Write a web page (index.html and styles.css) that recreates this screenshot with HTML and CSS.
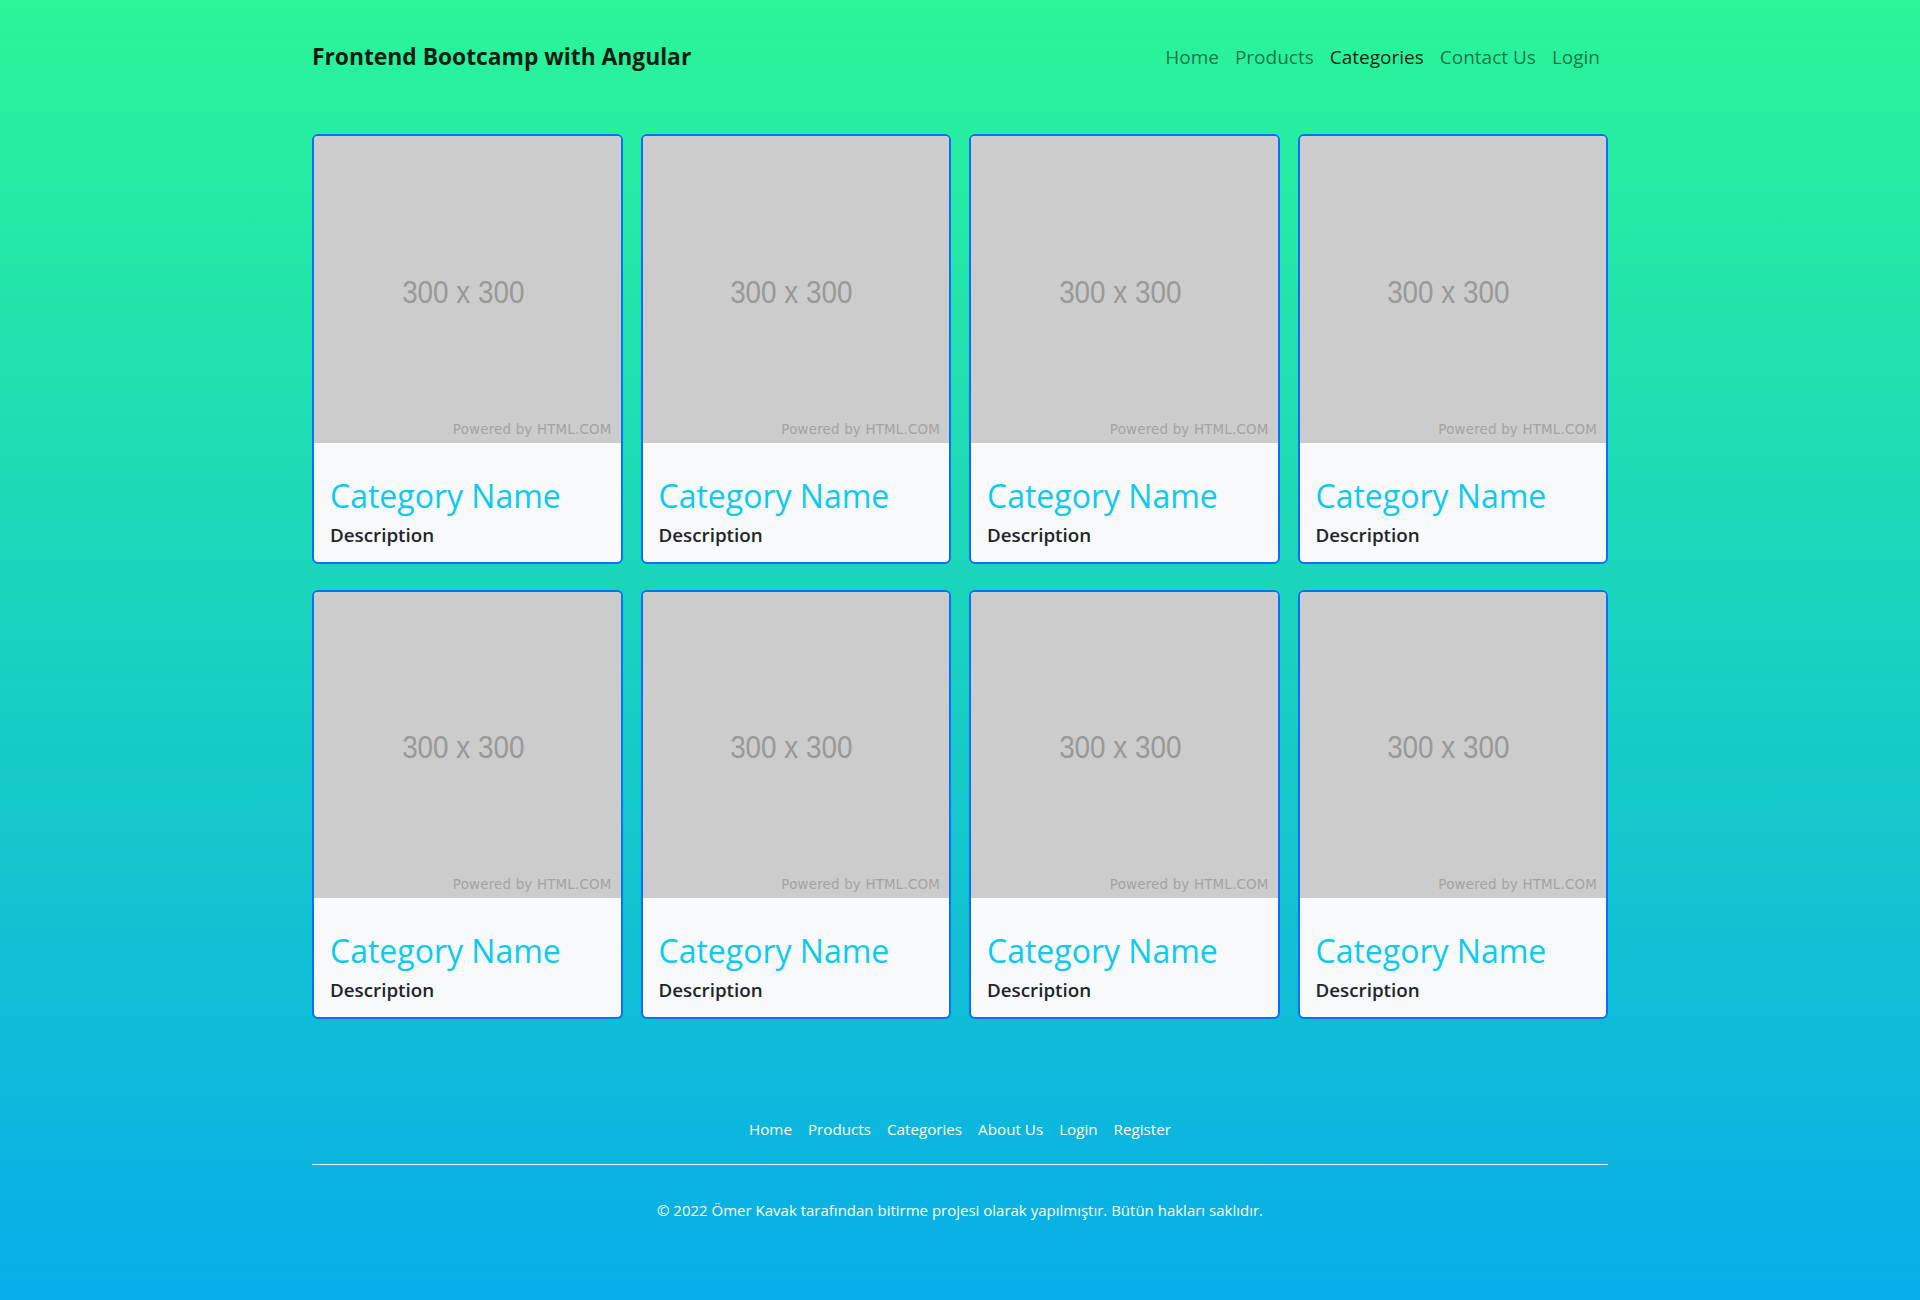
FILE: index.html
```html
<!DOCTYPE html>
<html lang="tr">
<head>
<meta charset="utf-8">
<title>Frontend Bootcamp with Angular</title>
<link rel="stylesheet" href="styles.css">
</head>
<body>
<div class="page">
  <header class="container header">
    <a class="brand" href="#">Frontend Bootcamp with Angular</a>
    <nav class="nav">
      <a href="#" class="nav-link">Home</a>
      <a href="#" class="nav-link">Products</a>
      <a href="#" class="nav-link active">Categories</a>
      <a href="#" class="nav-link">Contact Us</a>
      <a href="#" class="nav-link">Login</a>
    </nav>
  </header>

  <main class="container grid">
    <div class="card"><div class="thumb"><span class="thumb-size">300 x 300</span><span class="thumb-credit">Powered by HTML.COM</span></div><div class="card-body"><h2 class="card-title">Category Name</h2><h5 class="card-text">Description</h5></div></div>
    <div class="card"><div class="thumb"><span class="thumb-size">300 x 300</span><span class="thumb-credit">Powered by HTML.COM</span></div><div class="card-body"><h2 class="card-title">Category Name</h2><h5 class="card-text">Description</h5></div></div>
    <div class="card"><div class="thumb"><span class="thumb-size">300 x 300</span><span class="thumb-credit">Powered by HTML.COM</span></div><div class="card-body"><h2 class="card-title">Category Name</h2><h5 class="card-text">Description</h5></div></div>
    <div class="card"><div class="thumb"><span class="thumb-size">300 x 300</span><span class="thumb-credit">Powered by HTML.COM</span></div><div class="card-body"><h2 class="card-title">Category Name</h2><h5 class="card-text">Description</h5></div></div>
    <div class="card"><div class="thumb"><span class="thumb-size">300 x 300</span><span class="thumb-credit">Powered by HTML.COM</span></div><div class="card-body"><h2 class="card-title">Category Name</h2><h5 class="card-text">Description</h5></div></div>
    <div class="card"><div class="thumb"><span class="thumb-size">300 x 300</span><span class="thumb-credit">Powered by HTML.COM</span></div><div class="card-body"><h2 class="card-title">Category Name</h2><h5 class="card-text">Description</h5></div></div>
    <div class="card"><div class="thumb"><span class="thumb-size">300 x 300</span><span class="thumb-credit">Powered by HTML.COM</span></div><div class="card-body"><h2 class="card-title">Category Name</h2><h5 class="card-text">Description</h5></div></div>
    <div class="card"><div class="thumb"><span class="thumb-size">300 x 300</span><span class="thumb-credit">Powered by HTML.COM</span></div><div class="card-body"><h2 class="card-title">Category Name</h2><h5 class="card-text">Description</h5></div></div>
  </main>

  <footer class="container footer">
    <nav class="footer-nav">
      <a href="#" class="footer-link">Home</a>
      <a href="#" class="footer-link">Products</a>
      <a href="#" class="footer-link">Categories</a>
      <a href="#" class="footer-link">About Us</a>
      <a href="#" class="footer-link">Login</a>
      <a href="#" class="footer-link">Register</a>
    </nav>
    <p class="copyright">© 2022 Ömer Kavak tarafından bitirme projesi olarak yapılmıştır. Bütün hakları saklıdır.</p>
  </footer>
</div>
</body>
</html>
```

FILE: styles.css
```css
* { box-sizing: border-box; }

html, body {
  margin: 0;
  padding: 0;
}

body {
  font-family: "Open Sans", "Noto Sans", sans-serif;
  color: #212529;
  background: linear-gradient(to bottom, #2af598 0px, #07ade9 1300px);
  min-height: 1300px;
}

.page {
  min-height: 1300px;
}

.container {
  width: 1296px;
  margin: 0 auto;
}

/* Header */
.header {
  display: flex;
  align-items: center;
  justify-content: space-between;
  padding-top: 39px;
  height: 74px;
}

.brand {
  font-size: 22.8px;
  font-weight: 700;
  line-height: 36px;
  color: rgba(0, 0, 0, 0.9);
  text-decoration: none;
}

.nav {
  display: flex;
  align-items: center;
}

.nav-link {
  font-size: 19px;
  line-height: 36px;
  padding: 0 8px;
  color: rgba(0, 0, 0, 0.55);
  text-decoration: none;
}

.nav-link.active {
  color: rgba(0, 0, 0, 0.9);
}

/* Grid of cards */
.grid {
  display: grid;
  grid-template-columns: repeat(4, 1fr);
  column-gap: 18px;
  row-gap: 26px;
  padding-top: 60px;
}

.card {
  background: #f8f9fa;
  border: 2px solid #0d6efd;
  border-radius: 6px;
  overflow: hidden;
}

.thumb {
  position: relative;
  aspect-ratio: 1 / 1;
  background: #cccccc;
  display: flex;
  align-items: center;
  justify-content: center;
}

.thumb-size {
  font-family: "Liberation Sans", Arial, sans-serif;
  font-size: 32px;
  color: #999999;
  transform: translate(-4px, 3px) scaleX(0.87);
}

.thumb-credit {
  position: absolute;
  right: 9px;
  bottom: 6px;
  font-family: "DejaVu Sans", Verdana, sans-serif;
  font-size: 13.4px;
  color: #a3a3a3;
  letter-spacing: 0.2px;
}

.card-body {
  padding: 34px 16px 15px;
}

.card-title {
  margin: 0 0 8px;
  font-size: 32px;
  font-weight: 500;
  line-height: 38px;
  color: #0dcaf0;
}

.card-text {
  margin: 0;
  font-size: 18.8px;
  font-weight: 600;
  line-height: 24px;
  color: #212529;
}

/* Footer */
.footer {
  padding-top: 90px;
}

.footer-nav {
  display: flex;
  justify-content: center;
  padding: 8px 0 23px;
  border-bottom: 1px solid rgba(255, 255, 255, 0.85);
}

.footer-link {
  font-size: 15.2px;
  line-height: 24px;
  padding: 0 8px;
  color: #ffffff;
  text-decoration: none;
}

.copyright {
  margin: 33px 0 0;
  text-align: center;
  font-size: 15px;
  line-height: 24px;
  color: #ffffff;
}
```
